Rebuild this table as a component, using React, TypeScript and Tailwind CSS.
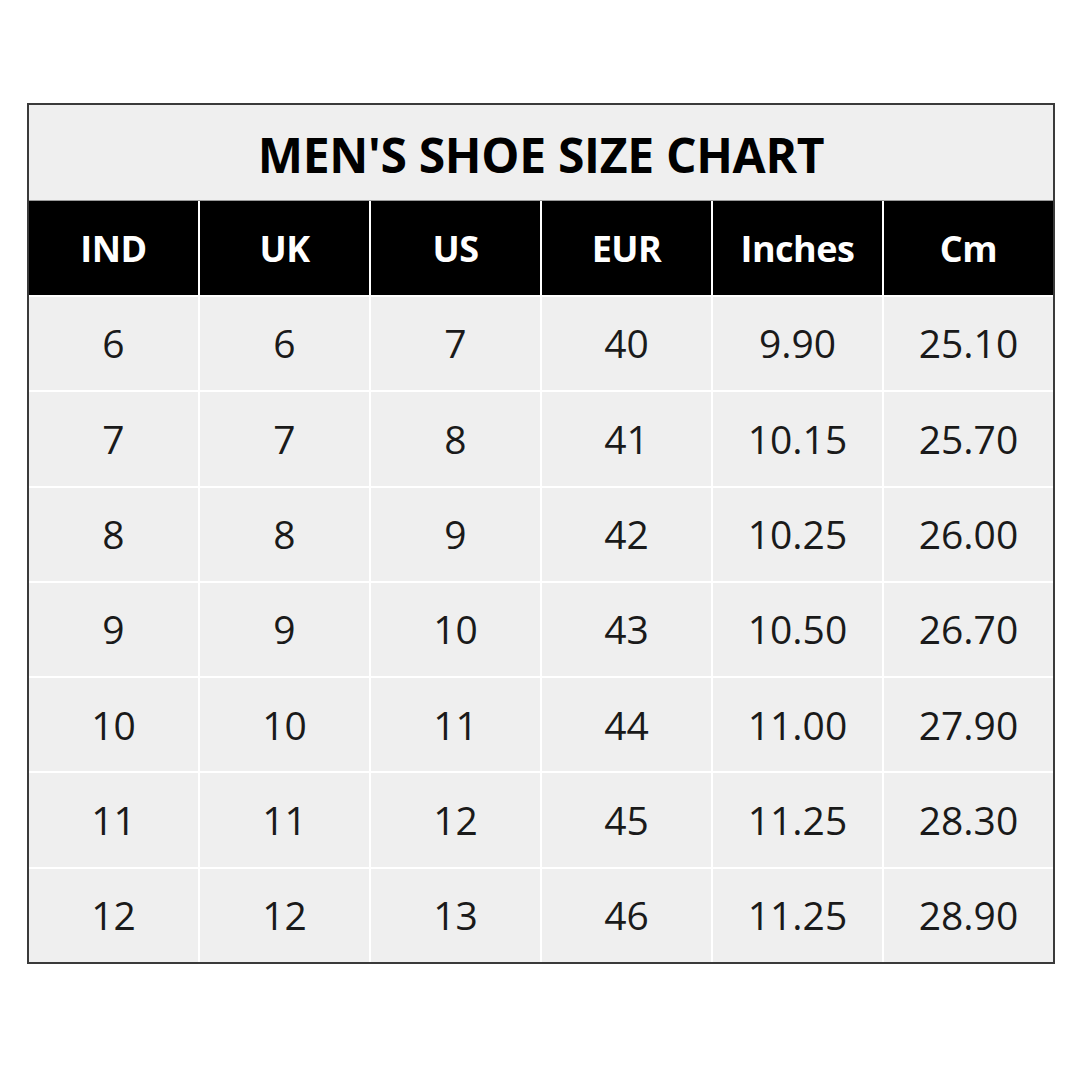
const headers = ['IND', 'UK', 'US', 'EUR', 'Inches', 'Cm'];

const rows = [
  ['6', '6', '7', '40', '9.90', '25.10'],
  ['7', '7', '8', '41', '10.15', '25.70'],
  ['8', '8', '9', '42', '10.25', '26.00'],
  ['9', '9', '10', '43', '10.50', '26.70'],
  ['10', '10', '11', '44', '11.00', '27.90'],
  ['11', '11', '12', '45', '11.25', '28.30'],
  ['12', '12', '13', '46', '11.25', '28.90'],
];

export default function App() {
  return (
    <div className="w-[1079px] h-[1079px] bg-white pt-[103px] pl-[27px]" style={{ fontFamily: '"Open Sans", "Noto Sans", sans-serif' }}>
      <div className="w-[1028px] border-2 border-[#3a3a3a] bg-white">
        <div className="h-[96px] bg-[#efefef] flex items-center justify-center border-b border-[#9a9a9a]">
          <h1 className="text-[48px] font-bold text-black tracking-[-0.3px] leading-none pt-[4px]">MEN'S SHOE SIZE CHART</h1>
        </div>
        <div className="grid grid-cols-6 gap-x-[2px] bg-white">
          {headers.map((h) => (
            <div key={h} className="h-[94px] bg-black text-white flex items-center justify-center text-[36px] font-bold tracking-[-0.5px] pt-[2px]">
              {h}
            </div>
          ))}
        </div>
        <div className="grid grid-cols-6 gap-[2px] pt-[2px] bg-white">
          {rows.flat().map((v, i) => (
            <div key={i} className="h-[93.3px] bg-[#efefef] flex items-center justify-center text-[39px] text-[#1a1a1a]">
              {v}
            </div>
          ))}
        </div>
      </div>
    </div>
  );
}
